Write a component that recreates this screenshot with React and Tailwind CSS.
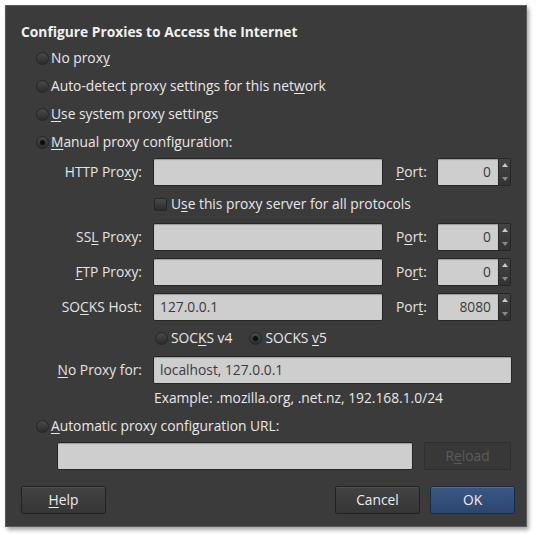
import React from "react";

const font = { fontFamily: '"Open Sans", "DejaVu Sans", sans-serif' };

const Radio = ({ checked }) => (
    <span className="relative inline-flex w-[13px] h-[13px] shrink-0 items-center justify-center rounded-full border border-[#262626] bg-gradient-to-b from-[#4a4a4a] to-[#2c2c2c]">
        {checked && <span className="w-[5px] h-[5px] rounded-full bg-[#0d0d0d]" />}
    </span>
);

const Field = ({ value = "", className = "" }) => (
    <div className={`h-[28px] rounded-[2px] border border-[#262626] bg-[#cecece] shadow-[inset_0_1px_1px_rgba(0,0,0,0.25)] flex items-center px-[6px] text-[13.8px] text-[#3a3a3a] ${className}`}>
        {value}
    </div>
);

const Spin = ({ value }) => (
    <div className="flex h-[28px]">
        <div className="w-[62px] h-full rounded-l-[2px] border border-[#262626] bg-[#cecece] shadow-[inset_0_1px_1px_rgba(0,0,0,0.25)] flex items-center justify-end pr-[7px] text-[13.8px] text-[#3a3a3a]">
            {value}
        </div>
        <div className="w-[12px] h-full rounded-r-[2px] border border-l-0 border-[#262626] bg-gradient-to-b from-[#444] to-[#333] flex flex-col items-center justify-between py-[4px]">
            <span className="w-0 h-0 border-l-[3px] border-r-[3px] border-b-[4px] border-l-transparent border-r-transparent border-b-[#c8c8c8]" />
            <span className="w-0 h-0 border-l-[3px] border-r-[3px] border-t-[4px] border-l-transparent border-r-transparent border-t-[#8a8a8a]" />
        </div>
    </div>
);

const ProxyRow = ({ label, port, value = "", portValue }) => (
    <>
        <div className="text-right text-[#e4e4e4]">{label}</div>
        <Field value={value} />
        <div className="ml-[2px] text-[#e4e4e4]">{port}</div>
        <Spin value={portValue} />
    </>
);

const RadioRow = ({ checked, children }) => (
    <div className="h-[28px] flex items-center pl-[15px] gap-[2px] text-[#e8e8e8]">
        <Radio checked={checked} />
        <span>{children}</span>
    </div>
);

const Btn = ({ children, className = "" }) => (
    <button className={`h-[28px] w-[85px] rounded-[2px] text-[13.8px] ${className}`}>{children}</button>
);

const grid = "grid grid-cols-[121px_230px_32px_74px] gap-x-[11px] gap-y-[7px] items-center";

const App = () => {
    return (
        <div className="w-[540px] h-[535px] bg-white p-[5px] text-[13.8px]" style={font}>
            <div className="w-[522px] h-[522px] bg-[#3b3b3b] border border-[#5a5a5a] shadow-[2px_3px_4px_rgba(0,0,0,0.35)] px-[15px] pt-[17px] [&_u]:underline-offset-2">
                <div className="h-[18px] leading-[18px] font-bold text-[#f0f0f0]">Configure Proxies to Access the Internet</div>

                <div className="mt-[3px]">
                    <RadioRow>No prox<u>y</u></RadioRow>
                    <RadioRow>Auto-detect proxy settings for this net<u>w</u>ork</RadioRow>
                    <RadioRow><u>U</u>se system proxy settings</RadioRow>
                    <RadioRow checked><u>M</u>anual proxy configuration:</RadioRow>
                </div>

                <div className={`mt-[2px] ${grid}`}>
                    <ProxyRow label={<>HTTP Pro<u>x</u>y:</>} port={<><u>P</u>ort:</>} portValue="0" />
                </div>

                <div className="h-[37px] flex items-center pl-[133px] gap-[4px] text-[#e8e8e8]">
                    <span className="w-[13px] h-[13px] rounded-[2px] border border-[#262626] bg-gradient-to-b from-[#4a4a4a] to-[#2c2c2c]" />
                    <span>U<u>s</u>e this proxy server for all protocols</span>
                </div>

                <div className={grid}>
                    <ProxyRow label={<>SS<u>L</u> Proxy:</>} port={<>P<u>o</u>rt:</>} portValue="0" />
                    <ProxyRow label={<><u>F</u>TP Proxy:</>} port={<>Po<u>r</u>t:</>} portValue="0" />
                    <ProxyRow label={<>SO<u>C</u>KS Host:</>} port={<>Por<u>t</u>:</>} value="127.0.0.1" portValue="8080" />
                </div>

                <div className="h-[35px] flex items-center pl-[134px] text-[#e8e8e8]">
                    <Radio />
                    <span className="ml-[3px]">SOC<u>K</u>S v4</span>
                    <span className="ml-[17px] flex"><Radio checked /></span>
                    <span className="ml-[3px]">SOCKS <u>v</u>5</span>
                </div>

                <div className="grid grid-cols-[121px_359px] gap-x-[11px] items-center">
                    <div className="text-right text-[#e4e4e4]"><u>N</u>o Proxy for:</div>
                    <Field value="localhost, 127.0.0.1" />
                </div>

                <div className="h-[28px] flex items-center pl-[133px] text-[#e8e8e8]">
                    Example: .mozilla.org, .net.nz, 192.168.1.0/24
                </div>

                <RadioRow><u>A</u>utomatic proxy configuration URL:</RadioRow>

                <div className="mt-[2px] flex items-center pl-[36px]">
                    <Field className="w-[356px]" />
                    <Btn className="ml-[11px] w-[87px] border border-[#2e2e2e] bg-[#383838] text-[#5c5c5c]">R<u>e</u>load</Btn>
                </div>

                <div className="mt-[16px] flex items-center">
                    <Btn className="w-[84px] border border-[#222] bg-gradient-to-b from-[#424242] to-[#363636] text-[#ececec] shadow-[inset_0_1px_0_rgba(255,255,255,0.08)]"><u>H</u>elp</Btn>
                    <Btn className="ml-auto -mr-[4px] border border-[#222] bg-gradient-to-b from-[#424242] to-[#363636] text-[#ececec] shadow-[inset_0_1px_0_rgba(255,255,255,0.08)]">Cancel</Btn>
                    <Btn className="ml-[14px] -mr-[4px] border border-[#1c2a40] bg-gradient-to-b from-[#3a5886] to-[#2b4670] text-[#f0f0f0] shadow-[inset_0_1px_0_rgba(255,255,255,0.12)]">OK</Btn>
                </div>
            </div>
        </div>
    );
};

export default App;
